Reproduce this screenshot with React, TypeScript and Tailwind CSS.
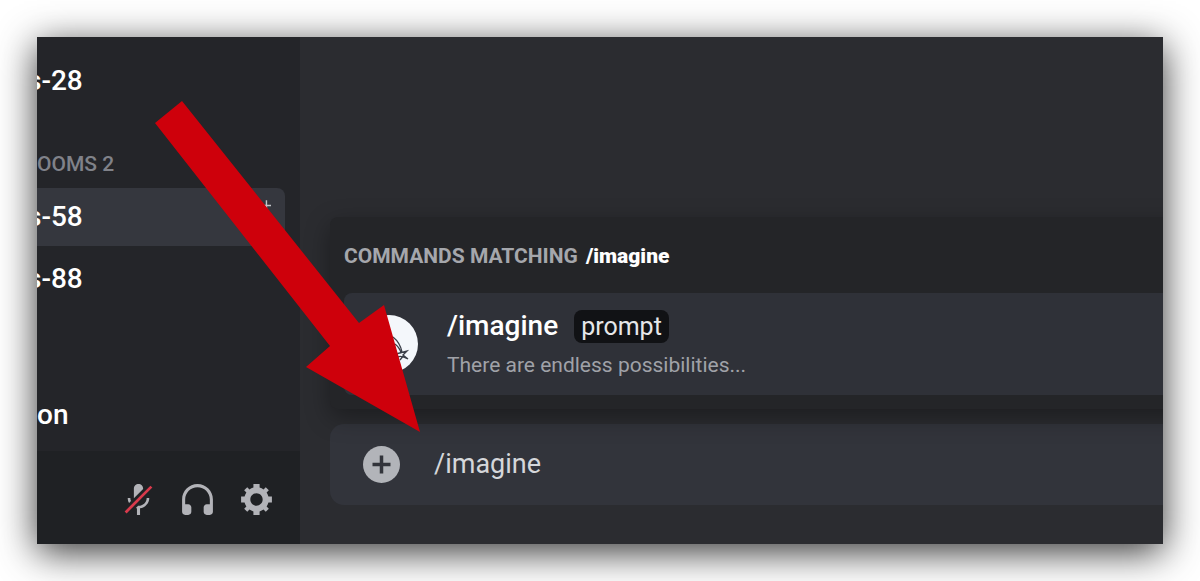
import type { ReactNode } from "react"

type Channel = { name: string; selected?: boolean }

const FONT = "font-['Roboto','Liberation_Sans',sans-serif]"
const ICON_BTN = "flex size-[37px] items-center justify-center text-[#b2b3b8] hover:text-white"

const ROOMS: Channel[] = [
  { name: "s-58", selected: true },
  { name: "s-88" },
]

function Icon({ children }: { children: ReactNode }) {
  return (
    <svg viewBox="0 0 24 24" className="size-full" fill="currentColor" aria-hidden="true">
      {children}
    </svg>
  )
}

function ChannelLink({ name, selected }: Channel) {
  return (
    <a
      href="#"
      className={`flex h-[58px] items-center justify-between rounded-r-lg pr-3.5 text-[28px] font-medium text-white ${selected ? "bg-[#35373e]" : ""}`}
    >
      <span className="-ml-2.5">{name}</span>
      {selected && (
        <svg viewBox="0 0 24 24" className="mb-2 size-7" fill="#c4c6ca" aria-hidden="true">
          <path d="M19.500 1h1.200v4H24v1.200h-3.300V9h-1.200V6.200H17V5h2.500z" />
          <circle cx="9" cy="11" r="3.500" />
          <path d="M3 20c0-3 3-4.500 6-4.500s6 1.500 6 4.500z" />
        </svg>
      )}
    </a>
  )
}

function UserPanel() {
  return (
    <div className="flex h-[93px] items-center justify-end gap-[22px] bg-[#1f2124] pr-[25px] pt-1">
      <button aria-label="Unmute" className={ICON_BTN}>
        <Icon>
          <path d="M6.7 11H5C5 12.190 5.340 13.300 5.900 14.280L7.130 13.050C6.860 12.430 6.700 11.740 6.700 11Z" />
          <path d="M9.010 11.085C9.015 11.112 9.020 11.140 9.020 11.170L15 5.180V5C15 3.340 13.660 2 12 2C10.340 2 9 3.340 9 5V11C9 11.030 9.005 11.058 9.010 11.085Z" />
          <path d="M11.724 16.093L10.963 16.853L10.253 17.569C10.498 17.633 10.747 17.684 11 17.720V22H13V17.720C16.280 17.230 19 14.410 19 11H17.300C17.300 14 14.760 16.100 12 16.100C11.908 16.100 11.816 16.098 11.724 16.093Z" />
          <path fill="#d83a4c" d="M21 4.270L19.730 3L3 19.730L4.270 21L8.460 16.820L9.690 15.580L11.350 13.920L14.990 10.280L21 4.270Z" />
        </Icon>
      </button>
      <button aria-label="Deafen" className={ICON_BTN}>
        <Icon>
          <path d="M12 2C6.486 2 2 6.488 2 12V20C2 21.107 2.895 22 4 22H6C7.104 22 8 21.107 8 20V17C8 15.899 7.104 15 6 15H4V12C4 7.591 7.589 4 12 4C16.411 4 20 7.591 20 12V15H18C16.896 15 16 15.899 16 17V20C16 21.107 16.896 22 18 22H20C21.104 22 22 21.107 22 20V12C22 6.488 17.514 2 12 2Z" />
        </Icon>
      </button>
      <button aria-label="User settings" className={ICON_BTN}>
        <Icon>
          <path
            fillRule="evenodd"
            d="M19.738 10H22V14H19.739C19.498 14.931 19.100 15.798 18.565 16.564L20 18L18 20L16.565 18.564C15.797 19.099 14.932 19.498 14 19.738V22H10V19.738C9.069 19.498 8.203 19.099 7.436 18.564L6 20L4 18L5.436 16.564C4.901 15.799 4.502 14.932 4.262 14H2V10H4.262C4.502 9.068 4.900 8.202 5.436 7.436L4 6L6 4L7.436 5.436C8.202 4.900 9.068 4.502 10 4.262V2H14V4.261C14.932 4.502 15.797 4.900 16.565 5.435L18 4L20 6L18.564 7.436C19.099 8.202 19.498 9.069 19.738 10ZM12 16C14.209 16 16 14.209 16 12C16 9.791 14.209 8 12 8C9.791 8 8 9.791 8 12C8 14.209 9.791 16 12 16Z"
          />
        </Icon>
      </button>
    </div>
  )
}

function Sidebar() {
  return (
    <aside className="flex w-[263px] shrink-0 flex-col bg-[#242529]">
      <nav className="flex flex-1 flex-col overflow-hidden pr-[15px] pt-[15px]">
        <ChannelLink name="s-28" />
        <h2 className="flex h-[78px] items-center pt-8 text-[21px] font-medium text-[#808289]">OOMS 2</h2>
        <div className="flex flex-col gap-1">
          {ROOMS.map((r) => <ChannelLink key={r.name} {...r} />)}
        </div>
        <a href="#" className="mt-[78px] flex h-[58px] items-center text-[28px] font-medium text-white">on</a>
      </nav>
      <UserPanel />
    </aside>
  )
}

function CommandPopup() {
  return (
    <section className="z-10 -mr-10 rounded-l-lg bg-[#242528] pb-3.5 pl-3.5 shadow-[0_8px_24px_rgba(0,0,0,0.35)]">
      <h3 className="flex h-[76px] items-center gap-2 pt-1 text-[21px] font-bold text-[#a5a7ac]">
        COMMANDS MATCHING <strong className="text-white">/imagine</strong>
      </h3>
      <button className="flex h-[102px] w-full items-center gap-[29px] rounded-l-lg bg-[#2f3138] pl-4 text-left">
        <svg viewBox="0 0 58 58" className="size-[58px] shrink-0" aria-hidden="true">
          <circle cx="29" cy="29" r="29" fill="#f4f7fb" />
          <g fill="none" stroke="#3a3e48" strokeWidth="1.300">
            <path d="M33 22C38 26 41 32 42 37M35 29C39 32 40 34 41 38" />
            <path d="M36 39L47 36L43 40L48 44M36 43C39 40 43 41 48 44M40 45L44 40" />
          </g>
        </svg>
        <span className="flex flex-col gap-2">
          <span className="flex items-center gap-4 text-[28px] leading-8 font-medium text-white">
            /imagine
            <span className="rounded-lg bg-[#111215] px-[7px] text-[25px] leading-[33px] font-normal text-[#e6e7e9]">prompt</span>
          </span>
          <span className="text-[21px] leading-7 text-[#a0a2a8]">There are endless possibilities...</span>
        </span>
      </button>
    </section>
  )
}

function MessageBar() {
  return (
    <div className="-mr-10 flex h-[81px] items-center gap-[34px] rounded-l-[14px] bg-[#32343b] pl-[33px]">
      <button aria-label="Add attachment" className="size-[37px] shrink-0">
        <svg viewBox="0 0 37 37" className="size-full" aria-hidden="true">
          <circle cx="18.500" cy="18.500" r="18.500" fill="#b2b4b9" />
          <path d="M18.500 9.500v18M9.500 18.500h18" stroke="#32343b" strokeWidth="3.500" />
        </svg>
      </button>
      <input
        aria-label="Message"
        defaultValue="/imagine"
        className="min-w-0 flex-1 bg-transparent text-[27px] text-[#d5d7da] outline-none"
      />
    </div>
  )
}

export default function App() {
  return (
    <div className={`flex min-h-screen bg-white p-[37px] ${FONT}`}>
      <div className="relative flex flex-1 shadow-[0_8px_36px_rgba(0,0,0,0.8)]">
        <Sidebar />
        <main className="flex min-w-0 flex-1 flex-col justify-end gap-[15px] overflow-hidden bg-[#2b2c30] pb-[39px] pl-[30px]">
          <CommandPopup />
          <MessageBar />
        </main>

        {/* arrow pointing at the message bar */}
        <svg
          viewBox="0 0 266 332"
          className="pointer-events-none absolute left-[118px] top-16 z-20 w-[266px]"
          aria-hidden="true"
        >
          <path d="M27 0L204 222L229 204L265 331L151 266L175 245L0 22Z" fill="#ce000b" />
        </svg>
      </div>
    </div>
  )
}
